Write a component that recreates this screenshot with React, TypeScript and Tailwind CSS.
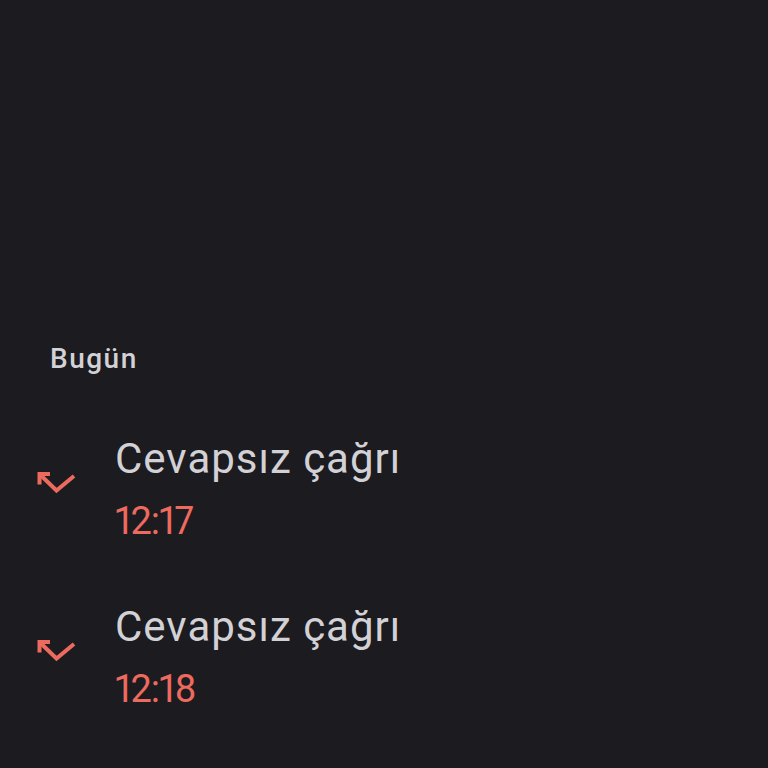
import React from 'react';

const calls = [
  { id: 1, label: 'Cevapsız çağrı', time: '12:17' },
  { id: 2, label: 'Cevapsız çağrı', time: '12:18' },
];

const MissedCallIcon: React.FC = () => (
  <svg width="42" height="26" viewBox="0 0 42 26" fill="none" className="shrink-0 mt-[35px]">
    <path d="M3.5 12.5V4H12" stroke="#ec6a5e" strokeWidth="4" strokeLinecap="square" />
    <path d="M3.5 4L20.5 20.5L38 6" stroke="#ec6a5e" strokeWidth="4" strokeLinecap="butt" />
  </svg>
);

export default function App() {
  return (
    <div className="w-[768px] h-[768px] overflow-hidden bg-[#1c1b20] font-['Roboto','Liberation_Sans',sans-serif]">
      <div className="pt-[343px]">
        <h2 className="pl-[50px] text-[28px] leading-[32px] font-medium tracking-[1.5px] text-[#d2d1d6]">Bugün</h2>
        <div className="flex flex-col">
          {calls.map((c) => (
            <div key={c.id} className="flex items-start pl-[36px] pt-[60px]">
              <MissedCallIcon />
              <div className="ml-[37px] flex flex-col gap-[16px]">
                <span className="text-[42px] leading-[48px] tracking-[1px] text-[#d2d1d6]">{c.label}</span>
                <span className="text-[38px] leading-[44px] tracking-[-1px] proportional-nums text-[#ec6a5e]">{c.time}</span>
              </div>
            </div>
          ))}
        </div>
      </div>
    </div>
  );
}
